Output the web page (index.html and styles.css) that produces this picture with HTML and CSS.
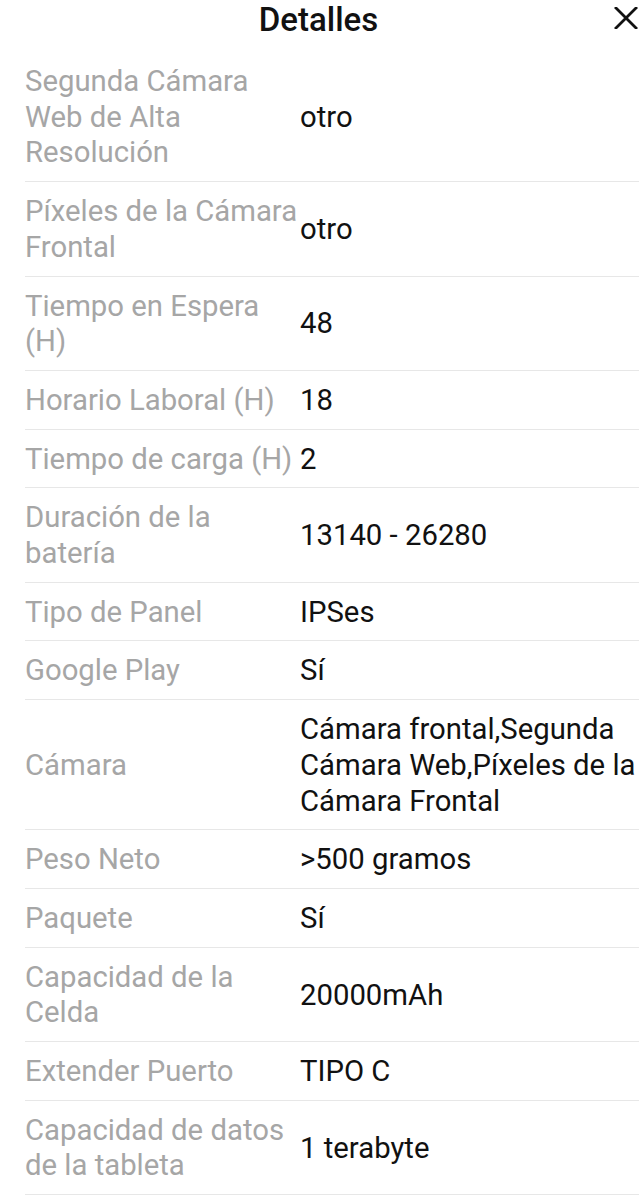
FILE: index.html
```html
<!DOCTYPE html>
<html lang="es">
<head>
<meta charset="utf-8">
<title>Detalles</title>
<link rel="stylesheet" href="styles.css">
</head>
<body>
<div class="sheet">
  <header class="header">
    <h1 class="title">Detalles</h1>
    <button class="close" aria-label="Cerrar">
      <svg width="24" height="22" viewBox="0 0 24 22"><path d="M2 1 L22 21 M22 1 L2 21" stroke="#111" stroke-width="2.8" stroke-linecap="square" fill="none"/></svg>
    </button>
  </header>
  <div class="list">
    <div class="row"><div class="label">Segunda Cámara Web de Alta Resolución</div><div class="value">otro</div></div>
    <div class="row"><div class="label">Píxeles de la Cámara Frontal</div><div class="value">otro</div></div>
    <div class="row"><div class="label">Tiempo en Espera (H)</div><div class="value">48</div></div>
    <div class="row"><div class="label">Horario Laboral (H)</div><div class="value">18</div></div>
    <div class="row"><div class="label">Tiempo de carga (H)</div><div class="value">2</div></div>
    <div class="row"><div class="label">Duración de la batería</div><div class="value">13140 - 26280</div></div>
    <div class="row"><div class="label">Tipo de Panel</div><div class="value">IPSes</div></div>
    <div class="row"><div class="label">Google Play</div><div class="value">Sí</div></div>
    <div class="row"><div class="label">Cámara</div><div class="value">Cámara frontal,Segunda Cámara Web,Píxeles de la Cámara Frontal</div></div>
    <div class="row"><div class="label">Peso Neto</div><div class="value">&gt;500 gramos</div></div>
    <div class="row"><div class="label">Paquete</div><div class="value">Sí</div></div>
    <div class="row"><div class="label">Capacidad de la Celda</div><div class="value">20000mAh</div></div>
    <div class="row"><div class="label">Extender Puerto</div><div class="value">TIPO C</div></div>
    <div class="row"><div class="label">Capacidad de datos de la tableta</div><div class="value">1 terabyte</div></div>
  </div>
</div>
</body>
</html>
```

FILE: styles.css
```css
html, body {
  margin: 0;
  padding: 0;
  background: #ffffff;
}

body {
  font-family: Roboto, "Noto Sans", "Liberation Sans", sans-serif;
  color: #111111;
}

.sheet {
  width: 644px;
}

.header {
  position: relative;
  height: 52px;
  display: flex;
  justify-content: center;
}

.title {
  margin: 1px 7px 0 0;
  font-size: 33px;
  font-weight: 500;
  line-height: 38px;
  color: #111111;
}

.close {
  position: absolute;
  right: 6px;
  top: 7px;
  width: 24px;
  height: 22px;
  padding: 0;
  border: 0;
  background: none;
  display: flex;
}

.list {
  padding: 0 5px 0 25px;
}

.row {
  display: flex;
  align-items: center;
  padding: 12px 0 10px;
  border-bottom: 1px solid #e7e7e7;
  font-size: 29.3px;
  line-height: 35.7px;
}

.label {
  flex: 0 0 275px;
  color: #a6a6a6;
}

.value {
  flex: 1 1 auto;
  min-width: 0;
  color: #111111;
}
```
